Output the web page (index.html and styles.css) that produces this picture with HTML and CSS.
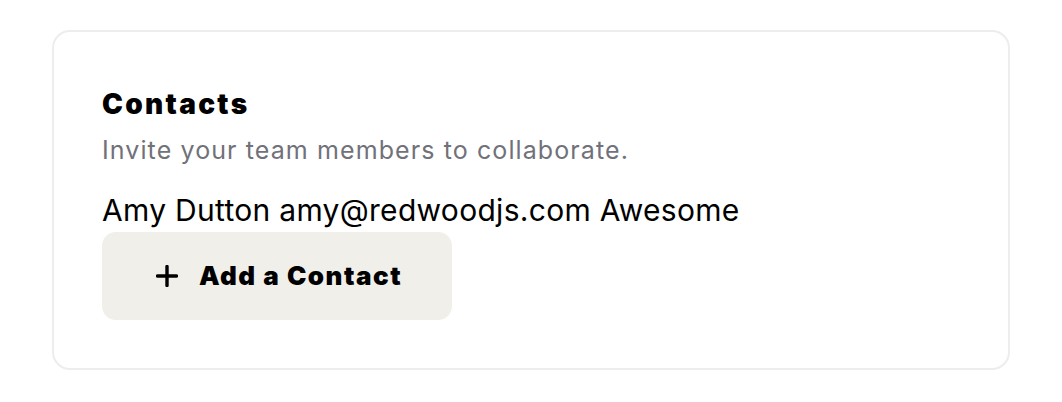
FILE: index.html
```html
<!DOCTYPE html>
<html>
<head>
<meta charset="utf-8">
<link rel="stylesheet" href="styles.css">
</head>
<body>
<div class="page">
  <section class="card">
    <h2 class="title">Contacts</h2>
    <p class="subtitle">Invite your team members to collaborate.</p>
    <div class="contact">Amy Dutton amy@redwoodjs.com Awesome</div>
    <button class="add-btn">
      <svg class="plus" width="22" height="22" viewBox="0 0 22 22"><path d="M11 1.5v19M1.5 11h19" stroke="#000" stroke-width="3.4" stroke-linecap="round" fill="none"/></svg>
      <span class="btn-label">Add a Contact</span>
    </button>
  </section>
</div>
</body>
</html>
```
FILE: styles.css
```css
html, body { margin: 0; padding: 0; background: #fff; }
body { font-family: Inter, "Noto Sans", sans-serif; color: #000; }
.page { padding: 30px 52px 0 52px; width: 958px; }
.card {
  box-sizing: border-box;
  width: 958px;
  height: 340px;
  border: 2px solid #ededed;
  border-radius: 18px;
  padding: 55px 48px 0 48px;
  display: flex;
  flex-direction: column;
  align-items: flex-start;
}
.title {
  margin: 0;
  font-family: Inter, sans-serif;
  font-weight: 900;
  font-size: 28px;
  line-height: 34px;
  letter-spacing: 2.3px;
}
.subtitle {
  margin: 14px 0 0 0;
  font-size: 25px;
  line-height: 30px;
  letter-spacing: 1.1px;
  color: #71717a;
}
.contact {
  margin-top: 27px;
  font-size: 30px;
  line-height: 36px;
  letter-spacing: 0.3px;
}
.add-btn {
  margin-top: 4px;
  width: 350px;
  height: 88px;
  border: none;
  border-radius: 14px;
  background: #f0efe9;
  display: flex;
  align-items: center;
  justify-content: center;
  gap: 21px;
  padding: 0 0 0 4px;
  font-family: Inter, sans-serif;
  font-weight: 900;
  font-size: 26px;
  letter-spacing: 1.5px;
  color: #000;
}
.plus { display: block; flex: none; }
.btn-label { line-height: 32px; }
```
